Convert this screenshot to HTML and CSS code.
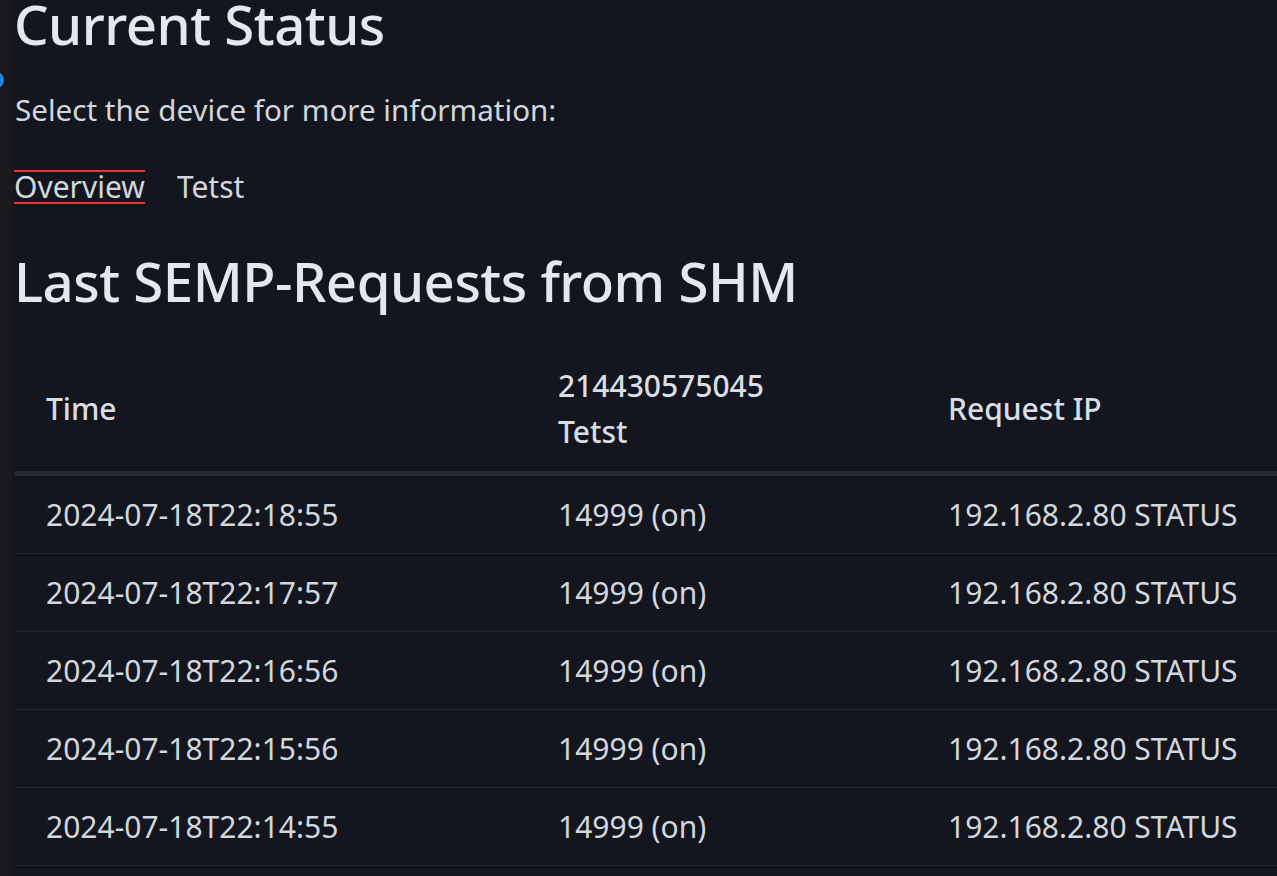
FILE: index.html
```html
<!DOCTYPE html>
<html lang="en">
<head>
<meta charset="utf-8">
<title>Current Status</title>
<link rel="stylesheet" href="styles.css">
</head>
<body>
<div class="app">
  <aside class="rail"><span class="dot"></span></aside>
  <main class="content">
    <h1 class="title title-1">Current Status</h1>
    <p class="lead">Select the device for more information:</p>
    <nav class="tabs">
      <a class="tab active">Overview</a>
      <a class="tab">Tetst</a>
    </nav>
    <h2 class="title title-2">Last SEMP-Requests from SHM</h2>
    <table class="log">
      <thead>
        <tr>
          <th class="c1">Time</th>
          <th class="c2">214430575045<br>Tetst</th>
          <th class="c3">Request IP</th>
        </tr>
      </thead>
      <tbody>
        <tr><td>2024-07-18T22:18:55</td><td>14999 (on)</td><td>192.168.2.80 STATUS</td></tr>
        <tr><td>2024-07-18T22:17:57</td><td>14999 (on)</td><td>192.168.2.80 STATUS</td></tr>
        <tr><td>2024-07-18T22:16:56</td><td>14999 (on)</td><td>192.168.2.80 STATUS</td></tr>
        <tr><td>2024-07-18T22:15:56</td><td>14999 (on)</td><td>192.168.2.80 STATUS</td></tr>
        <tr><td>2024-07-18T22:14:55</td><td>14999 (on)</td><td>192.168.2.80 STATUS</td></tr>
      </tbody>
    </table>
  </main>
</div>
</body>
</html>
```
FILE: styles.css
```css
html, body {
  margin: 0;
  padding: 0;
  height: 100%;
  overflow: hidden;
  background: #13161f;
}
.app {
  display: flex;
  min-height: 100%;
}
.rail {
  position: relative;
  flex: 0 0 13px;
  background: #1a1a1c;
}
.dot {
  position: absolute;
  left: -11px;
  top: 72px;
  width: 15px;
  height: 16px;
  border-radius: 50%;
  background: #1e88e5;
}
.content {
  flex: 1;
  padding: 0 0 0 1px;
  min-width: 0;
  color: #d7dbe2;
  font-family: "Noto Sans", "Open Sans", sans-serif;
}
.title {
  margin: 0;
  font-family: "Noto Sans", sans-serif;
  font-weight: 500;
  font-size: 54.5px;
  line-height: 68px;
  color: #e4e7ee;
  letter-spacing: -0.5px;
}
.title-1 {
  line-height: 48px;
}
.title-2 {
  margin: 43px 0 0;
}
.lead {
  margin: 42px 0 0 1px;
  font-size: 29.6px;
  line-height: 40px;
  color: #d2d6dd;
}
.tabs {
  display: flex;
  gap: 32px;
  margin-top: 40px;
}
.tab {
  font-size: 30px;
  line-height: 30px;
  color: #d2d6dd;
  border-top: 2px solid transparent;
  border-bottom: 2px solid transparent;
}
.tab.active {
  border-color: #e53935;
}
.log {
  margin-top: 28px;
  margin-left: 1px;
  width: 1290px;
  border-collapse: collapse;
  table-layout: fixed;
}
.log th {
  text-align: left;
  vertical-align: middle;
  font-family: "Noto Sans", sans-serif;
  font-weight: 500;
  font-size: 30px;
  line-height: 46px;
  color: #d9dde4;
  padding: 20px 31px 16px;
  border-bottom: 5px solid #272a36;
}
.c1 { width: 450px; }
.c2 { width: 328px; }
.log td {
  font-family: "Noto Sans", "Open Sans", sans-serif;
  font-size: 30px;
  line-height: 42px;
  color: #d2d6dd;
  padding: 18px 31px 17px;
  border-bottom: 1px solid #232633;
  white-space: nowrap;
}
```
